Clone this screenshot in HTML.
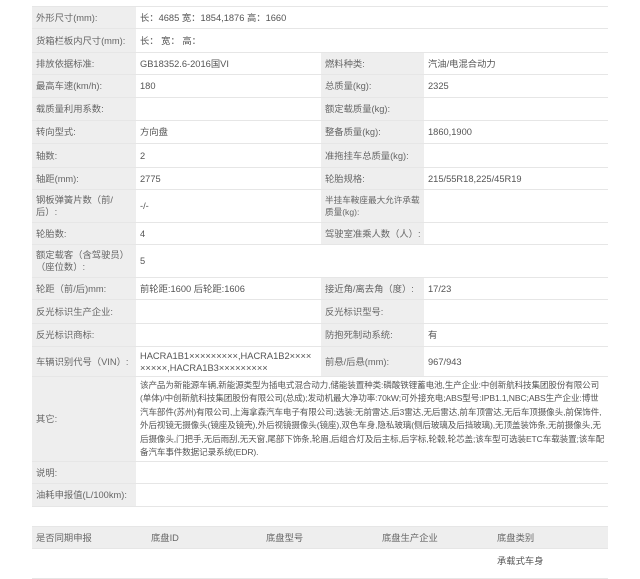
<!DOCTYPE html>
<html><head><meta charset="utf-8"><style>
body{margin:0;width:640px;height:563px;overflow:hidden;background:#fff;font-family:"Liberation Sans","Noto Sans CJK SC",sans-serif;font-size:9.3px;color:#555}
table{position:absolute;left:32px;border-collapse:collapse;table-layout:fixed}
td{padding:0 0 0 4px;border-top:1px solid #e6e6e6;border-bottom:1px solid #e6e6e6;vertical-align:middle;line-height:12px;white-space:nowrap;overflow:hidden}
td.l{background:#eeeeee;color:#666}
td.v{background:#fff;color:#555}
</style></head><body>
<table style="top:6px;width:576px">
<colgroup><col style="width:104px"><col style="width:185px"><col style="width:103px"><col style="width:184px"></colgroup>
<tr style="height:22px"><td class="l">外形尺寸(mm):</td><td class="v" colspan="3">长：4685 宽：1854,1876 高：1660</td></tr>
<tr style="height:24px"><td class="l">货箱栏板内尺寸(mm):</td><td class="v" colspan="3">长： 宽： 高：</td></tr>
<tr style="height:22px"><td class="l">排放依据标准:</td><td class="v">GB18352.6-2016国VI</td><td class="l">燃料种类:</td><td class="v">汽油/电混合动力</td></tr>
<tr style="height:23px"><td class="l">最高车速(km/h):</td><td class="v">180</td><td class="l">总质量(kg):</td><td class="v">2325</td></tr>
<tr style="height:23px"><td class="l">载质量利用系数:</td><td class="v"></td><td class="l">额定载质量(kg):</td><td class="v"></td></tr>
<tr style="height:23px"><td class="l">转向型式:</td><td class="v">方向盘</td><td class="l">整备质量(kg):</td><td class="v">1860,1900</td></tr>
<tr style="height:24px"><td class="l">轴数:</td><td class="v">2</td><td class="l">准拖挂车总质量(kg):</td><td class="v"></td></tr>
<tr style="height:22px"><td class="l">轴距(mm):</td><td class="v">2775</td><td class="l">轮胎规格:</td><td class="v">215/55R18,225/45R19</td></tr>
<tr style="height:33px"><td class="l">钢板弹簧片数（前/<br>后）:</td><td class="v">-/-</td><td class="l" style="font-size:8.6px">半挂车鞍座最大允许承载<br>质量(kg):</td><td class="v"></td></tr>
<tr style="height:22px"><td class="l">轮胎数:</td><td class="v">4</td><td class="l">驾驶室准乘人数（人）:</td><td class="v"></td></tr>
<tr style="height:33px"><td class="l">额定载客（含驾驶员）<br>（座位数）:</td><td class="v" colspan="3">5</td></tr>
<tr style="height:22px"><td class="l">轮距（前/后)mm:</td><td class="v">前轮距:1600 后轮距:1606</td><td class="l">接近角/离去角（度）:</td><td class="v">17/23</td></tr>
<tr style="height:24px"><td class="l">反光标识生产企业:</td><td class="v"></td><td class="l">反光标识型号:</td><td class="v"></td></tr>
<tr style="height:23px"><td class="l">反光标识商标:</td><td class="v"></td><td class="l">防抱死制动系统:</td><td class="v">有</td></tr>
<tr style="height:30px"><td class="l">车辆识别代号（VIN）:</td><td class="v">HACRA1B1×××××××××,HACRA1B2××××<br>×××××,HACRA1B3×××××××××</td><td class="l">前悬/后悬(mm):</td><td class="v">967/943</td></tr>
<tr style="height:85px"><td class="l">其它:</td><td class="v" colspan="3" style="line-height:13.5px;font-size:8.55px;letter-spacing:-0.1px">该产品为新能源车辆,新能源类型为插电式混合动力,储能装置种类:磷酸铁锂蓄电池,生产企业:中创新航科技集团股份有限公司<br>(单体)/中创新航科技集团股份有限公司(总成);发动机最大净功率:70kW;可外接充电;ABS型号:IPB1.1,NBC;ABS生产企业:博世<br>汽车部件(苏州)有限公司,上海拿森汽车电子有限公司;选装:无前雷达,后3雷达,无后雷达,前车顶雷达,无后车顶摄像头,前保饰件,<br>外后视镜无摄像头(镜座及镜壳),外后视镜摄像头(镜座),双色车身,隐私玻璃(侧后玻璃及后挡玻璃),无顶盖装饰条,无前摄像头,无<br>后摄像头,门把手,无后雨刮,无天窗,尾部下饰条,轮眉,后组合灯及后主标,后字标,轮毂,轮芯盖;该车型可选装ETC车载装置;该车配<br>备汽车事件数据记录系统(EDR).</td></tr>
<tr style="height:22px"><td class="l">说明:</td><td class="v" colspan="3"></td></tr>
<tr style="height:23px"><td class="l">油耗申报值(L/100km):</td><td class="v" colspan="3"></td></tr>
</table>
<table style="top:526px;width:576px">
<colgroup><col style="width:115px"><col style="width:115px"><col style="width:116px"><col style="width:115px"><col style="width:115px"></colgroup>
<tr style="height:22px;background:#eeeeee;color:#666"><td>是否同期申报</td><td>底盘ID</td><td>底盘型号</td><td>底盘生产企业</td><td>底盘类别</td></tr>
<tr style="height:30px"><td></td><td></td><td></td><td></td><td style="vertical-align:top;padding-top:6px">承载式车身</td></tr>
</table>
</body></html>
